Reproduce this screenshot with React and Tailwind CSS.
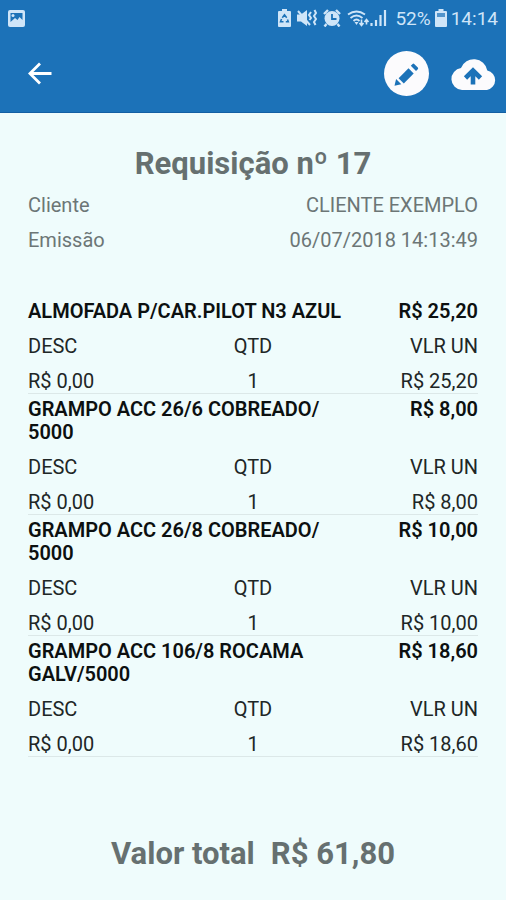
const itens = [
  { nome: "ALMOFADA P/CAR.PILOT N3 AZUL", total: "R$ 25,20", desc: "R$ 0,00", qtd: 1, unitario: "R$ 25,20" },
  { nome: "GRAMPO ACC 26/6 COBREADO/ 5000", total: "R$ 8,00", desc: "R$ 0,00", qtd: 1, unitario: "R$ 8,00" },
  { nome: "GRAMPO ACC 26/8 COBREADO/ 5000", total: "R$ 10,00", desc: "R$ 0,00", qtd: 1, unitario: "R$ 10,00" },
  { nome: "GRAMPO ACC 106/8 ROCAMA GALV/5000", total: "R$ 18,60", desc: "R$ 0,00", qtd: 1, unitario: "R$ 18,60" },
];

export default function App() {
  return (
    <div className="min-h-screen bg-[#effcfc] font-['Roboto',sans-serif] text-xl leading-[23px] text-[#202626]">

      {/* TOPBAR */}
      <header className="bg-[#1c72b8] border-b border-[#135fa3]">
        <StatusBar />
        <div className="h-[76px] flex items-center justify-between pl-6 pr-2">
          <button type="button" aria-label="Voltar" className="p-1">
            <svg width="24" height="24" viewBox="0 0 24 24" fill="none" stroke="#fff" strokeWidth="2.8">
              <path d="M23.5 11.5H2M12 1.5L1.9 11.5 12 21.5"/>
            </svg>
          </button>
          <div className="flex items-center gap-5">
            <button type="button" aria-label="Editar">
              <svg width="46" height="46" viewBox="0 0 46 46">
                <circle cx="22.5" cy="22.5" r="22.5" fill="#fcfbfd"/>
                <g fill="#1c72b8">
                  <path d="M10.5 34.8l1.6-6.8 5.2 5.2z"/>
                  <path d="M14.6 27.2L24.5 17.3l5.2 5.2L19.8 32.4z"/>
                  <path d="M26.8 14.8l1.8-1.8q.8-.8 1.6 0l3.6 3.6q.8.8 0 1.600l-1.8 1.800z"/>
                </g>
              </svg>
            </button>
            <button type="button" aria-label="Enviar para a nuvem">
              <svg width="48" height="46" viewBox="0 0 48 46">
                <path fill="#fcfbfd" d="M12 39A11 11 0 0 1 11 17.1 13.7 13.7 0 0 1 37.3 19.4 10 10 0 0 1 37 39z"/>
                <path d="M23 33.500V20M15.500 27L23 19.500l7.500 7.500" fill="none" stroke="#1c72b8" strokeWidth="4.6"/>
              </svg>
            </button>
          </div>
        </div>
      </header>

      <main className="px-7 pt-[33px]">
        <h1 className="text-center text-[31px] leading-9 font-bold text-[#667070]">Requisição nº 17</h1>

        <dl className="pt-3 space-y-3 text-[#6c7676]">
          <Linha label="Cliente" value="CLIENTE EXEMPLO" />
          <Linha label="Emissão" value="06/07/2018 14:13:49" />
        </dl>

        <ul className="pt-11">
          {itens.map((item) => (
            <Item key={item.nome} item={item} />
          ))}
        </ul>

        <p className="flex justify-center gap-4 pt-[79px] pb-6 text-[31px] leading-9 font-bold text-[#667070]">
          <span>Valor total</span>
          <span>R$ 61,80</span>
        </p>
      </main>
    </div>
  );
}

function Linha({ label, value }) {
  return (
    <div className="flex items-center justify-between">
      <dt>{label}</dt>
      <dd>{value}</dd>
    </div>
  );
}

function Item({ item }) {
  return (
    <li className="border-b border-[#dce8e8] pt-1">
      <div className="flex items-start justify-between gap-4 pb-3 font-semibold text-[#0c1010]">
        <h2 className="max-w-[315px]">{item.nome}</h2>
        <span className="whitespace-nowrap">{item.total}</span>
      </div>
      <table className="w-full table-fixed">
        <thead>
          <tr>
            <th scope="col" className="p-0 pb-3 text-left font-normal">DESC</th>
            <th scope="col" className="p-0 pb-3 text-center font-normal">QTD</th>
            <th scope="col" className="p-0 pb-3 text-right font-normal">VLR UN</th>
          </tr>
        </thead>
        <tbody>
          <tr>
            <td className="p-0 text-left">{item.desc}</td>
            <td className="p-0 text-center">{item.qtd}</td>
            <td className="p-0 text-right">{item.unitario}</td>
          </tr>
        </tbody>
      </table>
    </li>
  );
}

function StatusBar() {
  return (
    <div className="h-9 flex items-center justify-between px-2 text-[#cfe5f8]">
      <svg width="17" height="17" viewBox="0 0 17 17">
        <rect width="17" height="17" rx="2" fill="currentColor"/>
        <path d="M2.5 3h12v7l-3-3-2 3-2.5-2L2.5 12z" fill="#1c72b8"/>
        <circle cx="5" cy="5.5" r="1.5" fill="currentColor"/>
      </svg>

      <div className="flex items-center gap-1">
        <div className="flex items-center gap-1.5 mr-0.5">
          {/* economia de bateria */}
          <svg width="13" height="18" viewBox="0 0 13 18">
            <path d="M4 0h5v2h3a1 1 0 0 1 1 1v14a1 1 0 0 1-1 1H1a1 1 0 0 1-1-1V3a1 1 0 0 1 1-1h3z" fill="currentColor"/>
            <path d="M4.3 8.8L6.5 5.8l2.2 3M9.5 10.5l.8 2.2H7.8M3.5 10l-1 2.700h3" fill="none" stroke="#1c72b8" strokeWidth="1.5"/>
          </svg>
          {/* mudo, vibrando */}
          <svg width="20" height="18" viewBox="0 0 20 18">
            <path d="M0 5.500h4l6-4.500v16l-6-4.500H0z" fill="currentColor"/>
            <path d="M1 2l12 14" stroke="currentColor" strokeWidth="2"/>
            <path d="M14 3l-2 3 2 3-1.500 2M17.500 1l1.500 3-2 3 2 3-2 3 1.500 3" fill="none" stroke="currentColor" strokeWidth="2"/>
          </svg>
          {/* alarme */}
          <svg width="18" height="18" viewBox="0 0 18 18">
            <circle cx="9" cy="9.5" r="7.5" fill="currentColor"/>
            <path d="M1 5l4-4M13 1l4 4M3.5 15L1.5 17.5M14.5 15l2 2.5" stroke="currentColor" strokeWidth="2.4"/>
            <path d="M9 5V10h4.500" fill="none" stroke="#1c72b8" strokeWidth="1.800"/>
          </svg>
        </div>
        <div className="flex items-center mr-1">
          <svg width="23" height="18" viewBox="0 0 23 18">
            <path d="M1 5.500q8.500-6 17 0M3.500 9q6-5 12 0M6.500 12q3-3 6 0" fill="none" stroke="currentColor" strokeWidth="1.8"/>
            <path d="M7.500 13h4l-2 3z" fill="currentColor"/>
            <path d="M14.5 10.500v6M12.500 14l2 2.500 2-2.500M19.500 15.500v-5M17.500 13l2-2.500 2 2.500" fill="none" stroke="currentColor" strokeWidth="1.6"/>
          </svg>
          <svg width="17" height="18" viewBox="0 0 17 18">
            <path d="M1.5 17v-3M6 17v-6M10.5 17V6M15 17V1" stroke="currentColor" strokeWidth="2.2"/>
          </svg>
        </div>
        <span className="text-[19px]">52%</span>
        <svg width="12" height="18" viewBox="0 0 12 18">
          <path d="M3.5 0h5v2H11a1 1 0 0 1 1 1v14a1 1 0 0 1-1 1H1a1 1 0 0 1-1-1V3a1 1 0 0 1 1-1h2.5z" fill="currentColor"/>
          <path d="M2 4h8v4H2z" fill="#5294cb"/>
        </svg>
        <span className="text-[19px]">14:14</span>
      </div>
    </div>
  );
}
